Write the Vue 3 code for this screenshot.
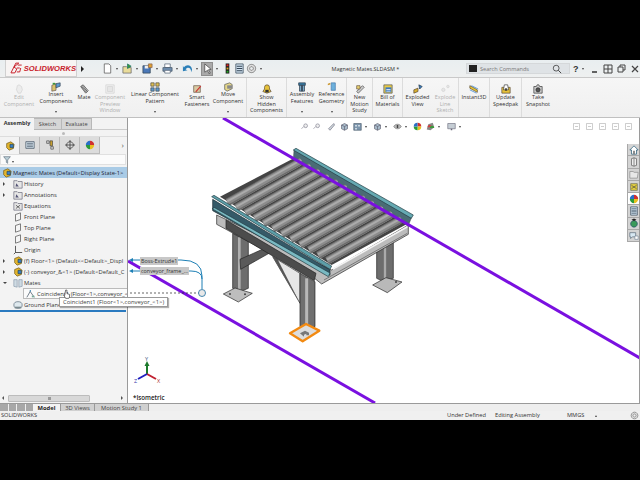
<script setup>
import { h } from "vue";

// small icon set, 12x12 grid: [path, fill, stroke]
const icons = {
  doc: [["M2.5 1h5l2 2v8h-7z", "#fff", "#555"]],
  open: [["M1 4h4l1 1h4v6H1z", "#e9dc9a", "#666"], ["M6 1l4 2.5L6 6z", "#3a9a3a", "#276"]],
  save: [["M1 3h8v8H1z", "#4a78b8", "#345"], ["M3 3h4v3H3z", "#eee"], ["M7 1h4v4H7z", "#e0a030", "#865"]],
  print: [["M3 1h6v4H3z", "#fff", "#567"], ["M1 5h10v4H1z", "#6f8fb0", "#456"], ["M3 8h6v3H3z", "#fff", "#567"]],
  undo: [["M2 5c3-4 8-3 9 2l-1 3c0-5-4-6-6-3l2 1-5 1V3z", "#2a7fb8"]],
  pick: [["M3 1l7 6-3 .4L9 11l-1.5.6L6 8l-3 2z", "#fff", "#444"]],
  light: [["M4 0.5h4v11H4z", "#222"], ["M5 1.5h2v2H5z", "#e22"], ["M5 5h2v2H5z", "#da2"], ["M5 8.500h2v2H5z", "#2a2"]],
  list: [["M2 1h8v10H2z", "#cfe0ee", "#345"], ["M3 3h6v1H3zM3 5.500h6v1H3zM3 8h6v1H3z", "#345"]],
  gear: [["M6 1.500a4.500 4.500 0 1 0 .01 0zM6 4a2 2 0 1 1-.01 0z", "#ddd", "#666"]],
  hand: [["M4 2l2-1 3 2 1 4-2 4H5L3 7z", "#e8e8e8", "#bbb"]],
  insert: [["M1 4l5-2 0 8-5 1z", "#d9c26a", "#655"], ["M6 2l5-1v4l-5 2z", "#5a9ad0", "#345"], ["M2 1h3v2H2z", "#3a9a3a"]],
  mate: [["M2 3l3-2 6 7-3 3z", "#ddd", "#333"], ["M4 2l6 7M3 3l6 7", "none", "#333"]],
  preview: [["M1 1h10v10H1z", "#eee", "#bbb"], ["M3 3h6v6H3z", "#ddd", "#bbb"]],
  pattern: [["M1 1h4v4H1zM7 1h4v4H7z", "#e0c050", "#444"], ["M1 7h4v4H1zM7 7h4v4H7z", "#5a9ad0", "#444"]],
  fastener: [["M2 2h8v8H2z", "#d8c9a0", "#654"], ["M4 9l6-7 1 1-6 7z", "#c33"]],
  move: [["M2 3l6-2 3 2v5l-6 3-3-2z", "#e5d78a", "#555"], ["M5 4h6v4H5z", "#8a8a8a"]],
  show: [["M6 1a3 3 0 0 1 3 3v2l2 3-5 2-5-2 2-3V4a3 3 0 0 1 3-3z", "#e6c23a", "#543"], ["M4 7h4v3H4z", "#333"]],
  features: [["M2 1h8v3H2z", "#3b7fa8", "#234"], ["M3 4h6v7H3z", "#7aa9c8", "#234"], ["M5 4h2v7H5z", "#345"]],
  reference: [["M5 1h5v9H5z", "#6cb0dc", "#47a"], ["M1 2l3-1v2L1 4z", "#c93"]],
  motion: [["M2 9l7-7 2 2-7 7z", "#ccc", "#444"], ["M2 2h4v4H2z", "#e8d070", "#654"]],
  bom: [["M1 1h10v10H1z", "#e6c94a", "#555"], ["M3 4h7v6H3z", "#3d7ac0"], ["M4 6h5v1H4zM4 8h5v1H4z", "#fff"]],
  explode: [["M1 7l5-2v4l-5 2z", "#d8b030", "#543"], ["M7 1l4 2-3 3z", "#3a7fc0", "#234"]],
  line: [["M2 7a2 2 0 1 0 4 0 2 2 0 1 0-4 0M8 3a1.500 1.500 0 1 0 3 0 1.500 1.500 0 1 0-3 0", "#ddd", "#bbb"]],
  instant: [["M1 2l9 5v3L1 5z", "#e8c838", "#543"], ["M3 2l8 4", "none", "#27c"], ["M1 7l8 4", "none", "#27c"]],
  speedpak: [["M1 4h10v7H1z", "#e6c23a", "#543"], ["M4 1h4l1 6H3z", "#fff", "#333"], ["M5 5h2v3H5z", "#333"]],
  camera: [["M1 3h3l1-2h2l1 2h3v8H1z", "#ccc", "#333"], ["M3.500 7a2.500 2.500 0 1 0 5 0 2.500 2.500 0 1 0-5 0", "#555", "#222"]],
  assy: [["M2 3l5-2 4 3-1 5-5 2-3-3z", "#e3b52e", "#6b5310"], ["M6 4h4v4H6z", "#3b80c8", "#245"]],
  tree: [["M1 2h10v8H1z", "#d7e4ee", "#345"], ["M2.500 4h7M2.500 6h7M2.500 8h7", "none", "#345"]],
  config: [["M2 1h3v3H2zM7 8h3v3H7z", "#ddd", "#444"], ["M6 1h3v6H6z", "#c8a030", "#444"]],
  target: [["M6 2a4 4 0 1 0 .01 0z", "none", "#222"], ["M6 0v12M0 6h12", "none", "#222"]],
  color: [["M6 1a5 5 0 0 1 5 5H6z", "#d03030"], ["M11 6a5 5 0 0 1-5 5V6z", "#e8c020"], ["M6 11A5 5 0 0 1 1 6h5z", "#2a9a3a"], ["M1 6a5 5 0 0 1 5-5v5z", "#2a6fc8"]],
  filter: [["M1 1h10L7 6v5L5 9.500V6z", "#bcd0d8", "#456"]],
  folder: [["M1 2h4l1 1h5v8H1z", "#e6e6e6", "#667"], ["M4 5l3 4H3z", "#557"]],
  eq: [["M1 2h4l1 1h5v8H1z", "#e6e6e6", "#667"], ["M3.500 5l5 4M8.500 5l-5 4", "none", "#333"]],
  plane: [["M3 3l6-2v8l-6 2z", "#f5f5f5", "#444"]],
  origin: [["M3 1v8h8", "none", "#111"], ["M3 9l-2 2", "none", "#111"]],
  mates: [["M1 2h4v9l-4-1zM7 2h4v8l-4 1z", "#cfdbe3", "#89a"]],
  coincident: [["M1 10L5 3l5 7", "none", "#345"], ["M4.500 1.500h1.500v1.500H4.500z", "#27a"], ["M7 8h3v2H7z", "#7a9"]],
  ground: [["M1 6a5 4 0 1 0 10 0 5 4 0 1 0-10 0", "#dfe9ee", "#567"], ["M2 8h8v2H2z", "#7a8a90"]],
  home: [["M6 1L1 6h2v5h6V6h2z", "#fff", "#17506e"], ["M5 7h2v4H5z", "#777"]],
  parts: [["M3 2l3-1 3 1v8l-3 1-3-1z", "#eee", "#555"], ["M6 1v10", "none", "#555"]],
  tfolder: [["M1 3h4l1 1h5l-1 7H1z", "#e8e8e8", "#888"]],
  lib: [["M2 2h8v8H2z", "#e4d040", "#665"], ["M3 4l6 4M9 4l-6 4", "none", "#444"]],
  globe: [["M6 3a4 4 0 1 0 .01 0z", "#3a9a5a", "#246"], ["M3 2l3-1.500L9 2 6 3.500z", "#222"]],
  chat: [["M1 2h7v5H4L2 9V7H1z", "#d8e8f2", "#567"], ["M7 6h4v4H7z", "#fff", "#789"]],
  zoomfit: [["M2 9l3-3M5 5a2.500 2.500 0 1 0 5 0 2.500 2.500 0 1 0-5 0", "#eee", "#778"]],
  sect: [["M2 9L9 2l1 2-6 7z", "#cfd6dc", "#667"]],
  cube: [["M2 4l4-2 4 2v5l-4 2-4-2z", "#a9bccb", "#556"], ["M6 6v5M2 4l4 2 4-2", "none", "#556"]],
  cubes: [["M1 2h10v9H1z", "#7d96ad", "#456"], ["M3 4h2v2H3zM7 4h2v2H7zM3 8h2v2H3z", "#e8eef2"]],
  eye: [["M1 6c2-4 8-4 10 0-2 4-8 4-10 0z", "#bbb", "#666"], ["M5 4h2v4H5z", "#444"]],
  scene: [["M1 10l2-7 6-2 2 6-5 4z", "#888"], ["M2 7a3 3 0 0 1 6 0z", "#d04040"], ["M5 8a3 3 0 0 1 6 0z", "#3a9a3a"]],
  monitor: [["M1 2h10v7H1z", "#c5cdd4", "#667"], ["M5 9h2v2H5z", "#667"]],
  pane: [["M2 2h8v8H2z", "none", "#999"], ["M4 6h4", "none", "#999"]],
};

// functional component, all icons go through this
const Ico = (props) =>
  h(
    "svg",
    { viewBox: "0 0 12 12", width: props.size || 10, height: props.size || 10, class: "ico" },
    (icons[props.name] || []).map((p) =>
      h("path", { d: p[0], fill: p[1], stroke: p[2] || "none", "stroke-width": 0.8 })
    )
  );
Ico.props = ["name", "size"];

const quickTools = [
  { icon: "doc", dd: true },
  { icon: "open", dd: true },
  { icon: "save", dd: true },
  { icon: "print", dd: true },
  { icon: "undo", dd: true },
  { icon: "pick", dd: true, on: true },
  { icon: "light" },
  { icon: "list" },
  { icon: "gear", dd: true },
];

const ribbon = [
  { w: 38, lines: ["Edit", "Component"], icon: "hand", off: true },
  { w: 36, lines: ["Insert", "Components"], icon: "insert", arrow: true },
  { w: 20, lines: ["Mate"], icon: "mate" },
  { w: 32, lines: ["Component", "Preview", "Window"], icon: "preview", off: true },
  { w: 58, lines: ["Linear Component", "Pattern"], icon: "pattern", arrow: true },
  { w: 26, lines: ["Smart", "Fasteners"], icon: "fastener" },
  { w: 37, lines: ["Move", "Component"], icon: "move", arrow: true, sep: true },
  { w: 40, lines: ["Show", "Hidden", "Components"], icon: "show", sep: true },
  { w: 30, lines: ["Assembly", "Features"], icon: "features", arrow: true },
  { w: 30, lines: ["Reference", "Geometry"], icon: "reference", arrow: true, sep: true },
  { w: 26, lines: ["New", "Motion", "Study"], icon: "motion", sep: true },
  { w: 30, lines: ["Bill of", "Materials"], icon: "bom", sep: true },
  { w: 29, lines: ["Exploded", "View"], icon: "explode" },
  { w: 27, lines: ["Explode", "Line", "Sketch"], icon: "line", off: true, sep: true },
  { w: 31, lines: ["Instant3D"], icon: "instant", sep: true },
  { w: 32, lines: ["Update", "Speedpak"], icon: "speedpak", sep: true },
  { w: 32, lines: ["Take", "Snapshot"], icon: "camera" },
];

const treeRows = [
  { text: "History", icon: "folder", exp: "r" },
  { text: "Annotations", icon: "folder", exp: "r" },
  { text: "Equations", icon: "eq" },
  { text: "Front Plane", icon: "plane" },
  { text: "Top Plane", icon: "plane" },
  { text: "Right Plane", icon: "plane" },
  { text: "Origin", icon: "origin" },
  { text: "(f) Floor<1> (Default<<Default>_Displ", icon: "assy", exp: "r" },
  { text: "(-) conveyor_&<1> (Default<Default_C", icon: "assy", exp: "r" },
  { text: "Mates", icon: "mates", exp: "d" },
  { text: "Coincident1 (Floor<1>,conveyor_<", icon: "coincident", child: true },
  { text: "Ground Plane", icon: "ground" },
];

const viewTools = [
  { icon: "zoomfit", w: 12 }, { icon: "zoomfit", w: 15 }, { icon: "sect", w: 13 }, { icon: "cube", w: 13 },
  { icon: "cubes", w: 20, dd: true }, { icon: "cube", w: 20, dd: true }, { icon: "eye", w: 20, dd: true },
  { icon: "color", w: 13 }, { icon: "scene", w: 21, dd: true }, { icon: "monitor", w: 20, dd: true },
];

const paneIcons = ["home", "parts", "tfolder", "lib", "color", "list", "globe", "chat"];

// rollers run between both rails, drawn in the 3x model coordinates
const rollers = Array.from({ length: 12 }, (_, i) => ({
  x1: 82 + i * 27.2,
  y1: 187 + i * 15.9,
  x2: 304 + i * 27.2,
  y2: 63 + i * 15.9,
}));
</script>

<template>
  <div class="page">
    <div class="black"></div>

    <div class="titlebar">
      <div class="logo">
        <svg viewBox="0 0 14 12" width="15" height="12">
          <path d="M2 11L7 1h3L5 5l3 2-2 4z" fill="none" stroke="#c8202a" stroke-width="1" />
          <path d="M9 3h4M8 6h3M12 6l-1 4H8" fill="none" stroke="#c8202a" stroke-width="1" />
        </svg>
        <span class="logo-text"><b>SOLID</b>WORKS</span>
      </div>
      <span class="logo-arrow"></span>
      <div class="quick">
        <div v-for="(t, i) in quickTools" :key="i" class="quick-item">
          <span class="quick-ico" :class="{ on: t.on }"><Ico :name="t.icon" :size="11" /></span>
          <span v-if="t.dd" class="quick-dd"><i class="dd-arrow"></i></span>
        </div>
      </div>
      <div class="doc-title">Magnetic Mates.SLDASM *</div>
      <div class="search">
        <span class="search-black"></span>
        <span class="search-text">Search Commands</span>
        <svg class="search-glass" viewBox="0 0 12 12" width="10" height="10">
          <circle cx="5" cy="5" r="3.500" fill="none" stroke="#444" />
          <path d="M7.500 7.500L11 11" stroke="#444" stroke-width="1.200" />
        </svg>
      </div>
      <div class="win-btns">
        <b class="help">?</b>
        <i class="dd-arrow"></i>
        <svg viewBox="0 0 60 10" width="60" height="10">
          <path d="M5 8h5" stroke="#333" stroke-width="1.500" />
          <path d="M17 1h8v8h-8zM21 1v8M17 5h8" fill="none" stroke="#444" />
          <path d="M31 3h5v5h-5zM33 3V1h5v5h-2" fill="none" stroke="#444" />
          <path d="M45 2l6 6M51 2l-6 6" stroke="#444" stroke-width="1.200" />
        </svg>
      </div>
    </div>

    <div class="ribbon">
      <div
        v-for="(b, i) in ribbon"
        :key="i"
        class="rib-btn"
        :class="{ off: b.off, sep: b.sep, 'has-arrow': b.arrow }"
        :style="{ width: b.w + 'px' }"
      >
        <Ico :name="b.icon" :size="10" />
        <div class="rib-label">
          <div v-for="l in b.lines" :key="l">{{ l }}</div>
        </div>
        <i v-if="b.arrow" class="dd-arrow rib-arrow"></i>
      </div>
    </div>

    <div class="main">
      <div class="panel">
        <div class="cm-tabs">
          <div class="cm-tab active">Assembly</div>
          <div class="cm-tab sk">Sketch</div>
          <div class="cm-tab ev">Evaluate</div>
        </div>
        <div class="grip"><span></span></div>
        <div class="fm-tabs">
          <div v-for="n in ['assy', 'tree', 'config', 'target', 'color']" :key="n" class="fm-tab" :class="{ active: n === 'assy' }">
            <Ico :name="n" :size="10" />
          </div>
          <span class="fm-more">›</span>
        </div>
        <div class="filter"><Ico name="filter" :size="8" /><i class="dd-arrow"></i></div>
        <div class="root-row">
          <Ico name="assy" :size="10" />
          <span>Magnetic Mates (Default&lt;Display State-1&gt;</span>
        </div>
        <div v-for="r in treeRows" :key="r.text" class="tree-row" :class="{ child: r.child }">
          <i class="exp" :class="r.exp"></i>
          <Ico :name="r.icon" :size="10" />
          <span class="tree-text">{{ r.text }}</span>
        </div>
        <div class="rollback"></div>
        <div class="tree-rest"></div>
        <div class="hscroll">
          <i class="sc-left"></i>
          <div class="sc-thumb"><span></span></div>
          <i class="sc-right"></i>
        </div>
      </div>

      <div class="canvas">
        <svg class="scene" viewBox="128 118 512 285" width="512" height="285">
          <!-- model, coordinates are 3x, origin at 200,140 -->
          <g transform="translate(200 140) scale(.3333)">
            <!-- legs behind -->
            <path d="M530 330l50-25v110l-25 12-25-12z" fill="#6d6d6d" stroke="#222" stroke-width="2" />
            <path d="M555 318v108" stroke="#aaa" stroke-width="7" />
            <path d="M518 435l40-22 48 13-44 32z" fill="#b9b9b9" stroke="#222" stroke-width="2" />
            <path d="M98 280l47 25v140l-25 10-22-10z" fill="#6d6d6d" stroke="#222" stroke-width="2" />
            <path d="M118 292v160" stroke="#b0b0b0" stroke-width="8" />
            <path d="M70 462l35-18 52 16-42 26z" fill="#bdbdbd" stroke="#222" stroke-width="2" />
            <circle cx="90" cy="462" r="3" fill="#444" />
            <circle cx="135" cy="463" r="3" fill="#444" />
            <circle cx="588" cy="426" r="3" fill="#444" />
            <!-- braces -->
            <path d="M120 358l85-38 2 20-85 48z" fill="#5a5a5a" stroke="#222" stroke-width="2" />
            <path d="M218 350l82 50v90z" fill="#e6e6e6" stroke="#222" stroke-width="2" />
            <path d="M218 350l14 6 68 134z" fill="#555" />
            <!-- under frame -->
            <path d="M50 225l345 165 230-135v28L365 432l-25-20L78 268l-28-15z" fill="#bcbcbc" stroke="#222" stroke-width="2" />
            <path d="M78 240l270 160-5 22L78 265z" fill="#4c4c4c" stroke="#222" stroke-width="2" />
            <path d="M398 388l224-128" stroke="#f4f4f4" stroke-width="5" />
            <path d="M372 420l250-140" stroke="#555" stroke-width="2" />
            <!-- front mid leg -->
            <path d="M300 400l45 25v135l-22 10-23-10z" fill="#6f6f6f" stroke="#222" stroke-width="2" />
            <path d="M320 415v150" stroke="#b8b8b8" stroke-width="9" />
            <path d="M270 580l48-28 40 20-50 32z" fill="#ddd" stroke="#f28a12" stroke-width="7" stroke-linejoin="round" />
            <path d="M300 580l15-8 12 6v8h-8v-5l-7 3v6z" fill="#777" />
            <!-- bed and back rail -->
            <path d="M60 170L290 50l335 200-230 125z" fill="#444" />
            <path d="M282 30l353 202-10 25L280 58z" fill="#4a6c75" stroke="#222" />
            <!-- rollers -->
            <g v-for="(r, i) in rollers" :key="i">
              <line :x1="r.x1" :y1="r.y1 + 12" :x2="r.x2" :y2="r.y2 + 12" stroke="#d0d0d0" stroke-width="2" />
              <line :x1="r.x1" :y1="r.y1" :x2="r.x2" :y2="r.y2" stroke="#6a6a6a" stroke-width="23" />
              <line :x1="r.x1" :y1="r.y1 - 1" :x2="r.x2" :y2="r.y2 - 1" stroke="#8c8c8c" stroke-width="16" />
              <line :x1="r.x1" :y1="r.y1 - 3" :x2="r.x2" :y2="r.y2 - 3" stroke="#ababab" stroke-width="6" />
            </g>
            <!-- rails on top -->
            <path d="M280 30l8-5 352 200-6 10z" fill="#66a9b2" stroke="#1f3a40" stroke-width="2" />
            <path d="M38 178l352 212v16L38 212z" fill="#355a68" stroke="#1a2b30" stroke-width="2" />
            <path d="M35 170l7-4 353 212-5 10z" fill="#5d9fa9" stroke="#1f3a40" stroke-width="2" />
            <path d="M36 206l8-3 346 196-5 11z" fill="#79b9c2" stroke="#1f3a40" stroke-width="2" />
          </g>
          <!-- sketch lines -->
          <line x1="223" y1="118" x2="640" y2="358" stroke="#7a10e0" stroke-width="3" />
          <line x1="128" y1="261" x2="375" y2="403" stroke="#7a10e0" stroke-width="3" />
          <!-- callout leaders -->
          <path d="M132 260h49q21 0 21 16v13M132 271h59q11 0 11 8" fill="none" stroke="#1d7fb5" stroke-width="1" />
          <path d="M129 260l4-2v4zM129 271l4-2v4z" fill="#1d7fb5" />
          <path d="M126 293h73" stroke="#222" stroke-width=".7" stroke-dasharray="2 2" />
          <circle cx="202" cy="293" r="3.500" fill="#e8e8e8" stroke="#1d6f9f" stroke-width=".8" />
          <!-- triad -->
          <path d="M147 374v-10" stroke="#1c7a2c" stroke-width="2" />
          <path d="M147 361l2.500 5h-5z" fill="#1c7a2c" />
          <path d="M147 374l9 5" stroke="#c02030" stroke-width="2" />
          <path d="M147 374l-9 5" stroke="#2020c0" stroke-width="2" />
          <text x="145" y="361" class="triad" fill="#357">Y</text>
          <text x="157" y="383" class="triad" fill="#a33">X</text>
          <text x="134" y="383" class="triad" fill="#33a">Z</text>
        </svg>

        <div class="headsup">
          <div v-for="(t, i) in viewTools" :key="i" class="hu-item" :style="{ width: t.w + 'px' }">
            <Ico :name="t.icon" :size="9" />
            <i v-if="t.dd" class="dd-arrow"></i>
          </div>
          <div class="hu-win">
            <Ico v-for="n in 5" :key="n" name="pane" :size="9" />
          </div>
        </div>

        <div class="taskpane">
          <div v-for="n in paneIcons" :key="n" class="pane-btn" :class="{ lit: n === 'color' }">
            <Ico :name="n" :size="10" />
          </div>
        </div>

        <div class="callout c1">Boss-Extrude1</div>
        <div class="callout c2">conveyor_frame_...</div>
        <div class="view-name">*Isometric</div>
      </div>

      <div class="tooltip">Coincident1 (Floor&lt;1&gt;,conveyor_&lt;1&gt;)</div>
      <svg class="cursor" viewBox="0 0 8 11" width="7" height="10">
        <path d="M3 1h1.500v4l3 1v3l-1 1.500H3L1 7l1 0z" fill="#fff" stroke="#222" stroke-width=".7" />
      </svg>
    </div>

    <div class="bottom-tabs">
      <div class="nav-btns"><i></i><i></i><i></i><i></i></div>
      <div class="b-tab active">Model</div>
      <div class="b-tab v3">3D Views</div>
      <div class="b-tab ms">Motion Study 1</div>
    </div>

    <div class="status">
      <span class="st-name">SOLIDWORKS</span>
      <span class="st-a">Under Defined</span>
      <span class="st-b">Editing Assembly</span>
      <span class="st-c">MMGS</span>
      <i class="st-up"></i>
      <Ico name="gear" :size="9" />
    </div>

    <div class="black"></div>
  </div>
</template>

<style scoped>
.page {
  width: 640px;
  height: 480px;
  overflow: hidden;
  display: flex;
  flex-direction: column;
  background: #000;
  font-family: "Open Sans", "Liberation Sans", sans-serif;
  font-size: 6px;
  color: #333;
}

.black {
  height: 60px;
  flex: none;
  background: #000;
}

.ico {
  display: block;
  flex: none;
}

.dd-arrow {
  display: block;
  width: 0;
  height: 0;
  border-left: 1.5px solid transparent;
  border-right: 1.5px solid transparent;
  border-top: 2px solid #444;
  flex: none;
}

/* title bar */
.titlebar {
  height: 17px;
  flex: none;
  display: flex;
  align-items: center;
  background: linear-gradient(#e9eef0, #eef0f0);
}

.logo {
  margin-left: 5px;
  width: 72px;
  height: 17px;
  box-sizing: border-box;
  background: #f7f4f3;
  border: 1px solid #d0d0d0;
  border-top: 0;
  display: flex;
  align-items: center;
  padding-left: 3px;
  gap: 1px;
}

.logo-text {
  font-family: "Liberation Sans", sans-serif;
  font-style: italic;
  font-weight: bold;
  font-size: 7.6px;
  color: #c8202a;
}

.logo-text b {
  font-weight: 900;
}

.logo-arrow {
  margin-left: 4px;
  width: 0;
  height: 0;
  border-top: 3px solid transparent;
  border-bottom: 3px solid transparent;
  border-left: 3px solid #222;
}

.quick {
  margin-left: 17px;
  width: 164px;
  display: flex;
  align-items: center;
}

.quick-item {
  display: flex;
  align-items: center;
}

.quick-ico {
  width: 12px;
  height: 14px;
  display: flex;
  align-items: center;
  justify-content: center;
}

.quick-ico.on {
  background: #a9a9a9;
  border: 1px solid #8e8e8e;
  box-sizing: border-box;
}

.quick-dd {
  width: 8px;
  display: flex;
  justify-content: center;
}

.doc-title {
  width: 201px;
  flex: none;
  text-align: center;
  font-size: 5.5px;
  color: #333;
}

.search {
  width: 104px;
  height: 11px;
  flex: none;
  box-sizing: border-box;
  background: #dfe3e6;
  display: flex;
  align-items: center;
  border: 1px solid #d5d8da;
}

.search-black {
  width: 8px;
  height: 7px;
  margin-left: 2px;
  background: #222;
}

.search-text {
  margin-left: 3px;
  width: 70px;
  color: #777;
  font-size: 5.6px;
}

.search-glass {
  margin-left: 2px;
}

.win-btns {
  margin-left: 3px;
  display: flex;
  align-items: center;
  gap: 3px;
}

.help {
  font-size: 9px;
  font-family: "Liberation Sans", sans-serif;
  color: #333;
}

/* ribbon */
.ribbon {
  height: 41px;
  flex: none;
  display: flex;
  background: linear-gradient(#f6f6f6, #f0f0f0);
  border-top: 1px solid #c9c9c9;
  border-bottom: 1px solid #c0c0c0;
  box-sizing: border-box;
}

.rib-btn {
  flex: none;
  box-sizing: border-box;
  display: flex;
  flex-direction: column;
  align-items: center;
  padding-top: 6px;
  text-align: center;
}

.rib-btn.sep {
  border-right: 1px solid #dcdcdc;
}

.rib-btn.has-arrow {
  padding-top: 4px;
}

.rib-btn.has-arrow .rib-label {
  margin-top: -1px;
}

.rib-label {
  line-height: 6.7px;
  font-size: 5.5px;
  white-space: nowrap;
}

.rib-btn.off {
  color: #b0b0b0;
}

.rib-btn.off .ico {
  opacity: 0.6;
}

.rib-arrow {
  margin-top: auto;
  margin-bottom: 4px;
}

/* main area */
.main {
  height: 285px;
  flex: none;
  display: flex;
  position: relative;
  background: #fff;
}

.panel {
  width: 128px;
  flex: none;
  box-sizing: border-box;
  border-right: 1px solid #9a9a9a;
  background: #f3f3f3;
  display: flex;
  flex-direction: column;
}

.cm-tabs {
  height: 12px;
  flex: none;
  display: flex;
  background: #f3f3f3;
  border-bottom: 1px solid #ccc;
  box-sizing: border-box;
}

.cm-tab {
  width: 34px;
  height: 12px;
  box-sizing: border-box;
  background: #d6d6d6;
  border: 1px solid #b8b8b8;
  border-left: 0;
  text-align: center;
  line-height: 10px;
  font-size: 5.6px;
  color: #444;
}

.cm-tab.active {
  background: #f3f3f3;
  border: 0;
  font-weight: 700;
  color: #333;
  line-height: 11px;
}

.cm-tab.sk {
  width: 28px;
}

.cm-tab.ev {
  width: 30px;
}

.grip {
  height: 7px;
  flex: none;
  display: flex;
  align-items: center;
  justify-content: center;
  border-bottom: 1px solid #ddd;
  box-sizing: border-box;
}

.grip span {
  width: 3px;
  height: 3px;
  border-radius: 50%;
  background: #bbb;
}

.fm-tabs {
  height: 17px;
  flex: none;
  display: flex;
  align-items: stretch;
}

.fm-tab {
  width: 20px;
  box-sizing: border-box;
  background: #dcdcdc;
  border-right: 1px solid #bbb;
  border-bottom: 1px solid #bbb;
  display: flex;
  align-items: center;
  justify-content: center;
}

.fm-tab.active {
  background: #f3f3f3;
  border-bottom: 0;
}

.fm-more {
  flex: 1;
  text-align: right;
  padding-right: 3px;
  font-size: 8px;
  line-height: 15px;
  color: #555;
}

.filter {
  height: 11px;
  flex: none;
  margin-right: 1px;
  box-sizing: border-box;
  padding-left: 2px;
  display: flex;
  align-items: center;
  gap: 1px;
  background: #fbfbfb;
  border: 1px solid #e0e0e0;
}

.filter .dd-arrow {
  margin-top: 4px;
}

.root-row {
  height: 11px;
  margin-top: 2px;
  flex: none;
  display: flex;
  align-items: center;
  gap: 1px;
  padding-left: 2px;
  background: #a9cbe6;
  white-space: nowrap;
  overflow: hidden;
  font-size: 5.7px;
  color: #223;
}

.tree-row {
  height: 11px;
  flex: none;
  display: flex;
  align-items: center;
  padding-left: 3px;
  white-space: nowrap;
  overflow: hidden;
  font-size: 5.8px;
}

.exp {
  width: 10px;
  flex: none;
  display: flex;
  align-items: center;
}

.exp.r::before {
  content: "";
  border-top: 2px solid transparent;
  border-bottom: 2px solid transparent;
  border-left: 2px solid #444;
}

.exp.d::before {
  content: "";
  border-left: 2px solid transparent;
  border-right: 2px solid transparent;
  border-top: 2px solid #444;
}

.tree-text {
  margin-left: 1px;
}

.tree-row.child {
  margin-left: 23px;
  padding-left: 2px;
  box-sizing: border-box;
  background: #fbfbfb;
  border: 1px solid #bbb;
  border-right: 0;
}

.tree-row.child .exp {
  display: none;
}

.rollback {
  height: 2px;
  margin-right: 1px;
  flex: none;
  background: #2a7ac0;
}

.tree-rest {
  flex: 1;
}

.hscroll {
  height: 10px;
  flex: none;
  display: flex;
  align-items: center;
}

.sc-left,
.sc-right {
  width: 0;
  height: 0;
  border-top: 2px solid transparent;
  border-bottom: 2px solid transparent;
  flex: none;
}

.sc-left {
  margin-left: 2px;
  border-right: 2px solid #555;
}

.sc-right {
  margin-left: 31px;
  border-left: 2px solid #555;
}

.sc-thumb {
  margin-left: 4px;
  width: 82px;
  height: 7px;
  box-sizing: border-box;
  background: #d8d8d8;
  border: 1px solid #bcbcbc;
  border-radius: 1px;
  display: flex;
  align-items: center;
  justify-content: center;
}

.sc-thumb span {
  width: 3px;
  height: 3px;
  background: #999;
}

/* graphics area */
.canvas {
  flex: 1;
  position: relative;
  background: #fff;
  overflow: hidden;
  border-right: 1px solid #9a9a9a;
}

.scene {
  position: absolute;
  left: 0;
  top: 0;
}

.triad {
  font: 5.5px "Open Sans", sans-serif;
}

.headsup {
  position: absolute;
  left: 172px;
  top: 4px;
  right: 6px;
  height: 9px;
  display: flex;
  align-items: center;
}

.hu-item {
  flex: none;
  display: flex;
  align-items: center;
  gap: 3px;
}

.hu-win {
  margin-left: auto;
  display: flex;
  gap: 4px;
  opacity: 0.8;
}

.taskpane {
  position: absolute;
  right: 0;
  top: 26px;
  width: 12px;
  display: flex;
  flex-direction: column;
}

.pane-btn {
  height: 12.3px;
  box-sizing: border-box;
  background: #d4d4d4;
  border: 1px solid #a8a8a8;
  border-right: 0;
  border-top: 0;
  display: flex;
  align-items: center;
  justify-content: center;
}

.pane-btn.lit {
  background: #fff;
}

.callout {
  position: absolute;
  height: 8px;
  line-height: 8px;
  background: #c8c8c8;
  font-size: 5.4px;
  padding: 0 1px;
  color: #333;
  white-space: nowrap;
}

.c1 {
  left: 12px;
  top: 139px;
}

.c2 {
  left: 12px;
  top: 149px;
}

.view-name {
  position: absolute;
  left: 5px;
  top: 275px;
  font-size: 6.2px;
  font-weight: 600;
  color: #222;
}

.tooltip {
  position: absolute;
  left: 59px;
  top: 179px;
  height: 10px;
  box-sizing: border-box;
  padding: 0 3px;
  line-height: 9px;
  font-size: 5.9px;
  background: #fff;
  border: 1px solid #999;
  box-shadow: 1px 1px 1px rgba(0, 0, 0, 0.3);
  white-space: nowrap;
  color: #444;
}

.cursor {
  position: absolute;
  left: 63px;
  top: 171px;
}

/* bottom */
.bottom-tabs {
  height: 8px;
  flex: none;
  display: flex;
  background: #eeeeee;
  border-top: 1px solid #9a9a9a;
  font-size: 5.8px;
  line-height: 8px;
}

.nav-btns {
  width: 33px;
  display: flex;
  gap: 1px;
}

.nav-btns i {
  width: 8px;
  background: #a8a8a8;
}

.b-tab {
  box-sizing: border-box;
  text-align: center;
  background: #d0d0d0;
  border-right: 1px solid #999;
  color: #444;
}

.b-tab.active {
  width: 28px;
  background: #f3f3f3;
  font-weight: 700;
  color: #222;
}

.b-tab.v3 {
  width: 34px;
}

.b-tab.ms {
  width: 54px;
}

.status {
  height: 9px;
  flex: none;
  display: flex;
  align-items: center;
  background: #f0f0f0;
  font-size: 5.7px;
  line-height: 9px;
  margin-top: -1px;
}

.status span {
  flex: none;
}

.st-name {
  margin-left: 1px;
  width: 446px;
}

.st-a {
  width: 48px;
}

.st-b {
  width: 72px;
}

.st-c {
  width: 28px;
}

.st-up {
  flex: none;
  width: 0;
  height: 0;
  border-left: 1.5px solid transparent;
  border-right: 1.5px solid transparent;
  border-bottom: 2px solid #444;
  margin-right: 33px;
}
</style>

<style>
html,
body {
  margin: 0;
  background: #000;
}
</style>
